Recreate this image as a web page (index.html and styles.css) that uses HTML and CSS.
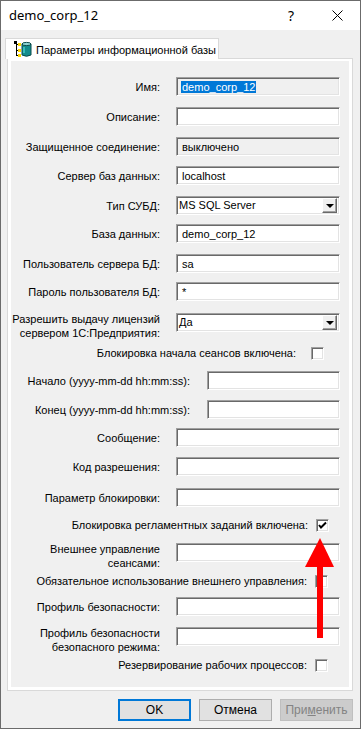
FILE: index.html
```html
<!DOCTYPE html>
<html lang="ru">
<head>
    <meta charset="UTF-8">
    <title>demo_corp_12</title>
    <link rel="stylesheet" href="styles.css">
</head>
<body>
    <div class="window">
        <div class="titlebar">
            <span class="title">demo_corp_12</span>
            <div class="caption-buttons">
                <span class="cap-btn help">?</span>
                <span class="cap-btn">
                    <svg width="11" height="11" viewBox="0 0 11 11"><path d="M0.5 0.5 L10.5 10.5 M10.5 0.5 L0.5 10.5" stroke="#000" stroke-width="1" fill="none"/></svg>
                </span>
            </div>
        </div>

        <div class="dialog">
            <div class="tabs">
                <div class="tab active">
                    <svg class="tab-icon" width="18" height="17" viewBox="0 0 18 17">
                        <path d="M2.5 1 V15 M2.5 3.5 H5 M2.5 9.5 H5 M2.5 14.5 H5" stroke="#000" stroke-width="1" fill="none"/>
                        <rect x="0" y="0" width="3" height="3" fill="#000"/>
                        <rect x="4" y="2" width="3" height="3" fill="#ffd800"/>
                        <rect x="4" y="8" width="3" height="3" fill="#ffd800"/>
                        <rect x="4" y="13" width="3" height="3" fill="#ffd800"/>
                        <path d="M8 3 V14 Q12.5 16.5 17 14 V3 Z" fill="#138c8c" stroke="#0b4a4a" stroke-width="1"/>
                        <ellipse cx="12.5" cy="3" rx="4.5" ry="1.6" fill="#8fd6d6" stroke="#0b4a4a" stroke-width="1"/>
                        <rect x="9" y="6" width="2" height="6" fill="#3bbcbc"/>
                    </svg>
                    <span>Параметры информационной базы</span>
                </div>
            </div>

            <div class="tab-page">
                <div class="form">
                    <div class="row">
                        <span class="label">Имя:</span>
                        <div class="field readonly"><span class="selection">demo_corp_12</span></div>
                    </div>
                    <div class="row">
                        <span class="label">Описание:</span>
                        <div class="field"></div>
                    </div>
                    <div class="row r29">
                        <span class="label">Защищенное соединение:</span>
                        <div class="field readonly">выключено</div>
                    </div>
                    <div class="row">
                        <span class="label">Сервер баз данных:</span>
                        <div class="field">localhost</div>
                    </div>
                    <div class="row r28">
                        <span class="label">Тип СУБД:</span>
                        <div class="field combo">
                            <span class="combo-text">MS SQL Server</span>
                            <span class="combo-btn"><span class="combo-arrow"></span></span>
                        </div>
                    </div>
                    <div class="row">
                        <span class="label">База данных:</span>
                        <div class="field">demo_corp_12</div>
                    </div>
                    <div class="row r28">
                        <span class="label">Пользователь сервера БД:</span>
                        <div class="field">sa</div>
                    </div>
                    <div class="row r31">
                        <span class="label">Пароль пользователя БД:</span>
                        <div class="field">*</div>
                    </div>
                    <div class="row r34">
                        <span class="label two-lines">Разрешить выдачу лицензий<br>сервером 1С:Предприятия:</span>
                        <div class="field combo">
                            <span class="combo-text">Да</span>
                            <span class="combo-btn"><span class="combo-arrow"></span></span>
                        </div>
                    </div>
                    <div class="row check-row r24 pr27 gap15">
                        <span class="check-label">Блокировка начала сеансов включена:</span>
                        <span class="checkbox"></span>
                    </div>
                    <div class="row r29 gap17">
                        <span class="label wide">Начало (yyyy-mm-dd hh:mm:ss):</span>
                        <div class="field short"></div>
                    </div>
                    <div class="row r28 gap17">
                        <span class="label wide">Конец (yyyy-mm-dd hh:mm:ss):</span>
                        <div class="field short"></div>
                    </div>
                    <div class="row r29">
                        <span class="label">Сообщение:</span>
                        <div class="field"></div>
                    </div>
                    <div class="row r31">
                        <span class="label">Код разрешения:</span>
                        <div class="field"></div>
                    </div>
                    <div class="row r31">
                        <span class="label">Параметр блокировки:</span>
                        <div class="field"></div>
                    </div>
                    <div class="row check-row r24 pr22">
                        <span class="check-label">Блокировка регламентных заданий включена:</span>
                        <span class="checkbox checked">
                            <svg width="11" height="11" viewBox="0 0 11 11"><path d="M2 5 L4 7.5 L9 2.5" stroke="#000" stroke-width="2" fill="none"/></svg>
                        </span>
                    </div>
                    <div class="row r32">
                        <span class="label two-lines">Внешнее управление<br>сеансами:</span>
                        <div class="field"></div>
                    </div>
                    <div class="row check-row r22 pr23">
                        <span class="check-label">Обязательное использование внешнего управления:</span>
                        <span class="checkbox"></span>
                    </div>
                    <div class="row">
                        <span class="label">Профиль безопасности:</span>
                        <div class="field"></div>
                    </div>
                    <div class="row r32">
                        <span class="label two-lines">Профиль безопасности<br>безопасного режима:</span>
                        <div class="field"></div>
                    </div>
                    <div class="row check-row r28 pr23">
                        <span class="check-label">Резервирование рабочих процессов:</span>
                        <span class="checkbox"></span>
                    </div>
                </div>
            </div>

            <div class="buttons">
                <button class="btn default">OK</button>
                <button class="btn">Отмена</button>
                <button class="btn" disabled>При<u>м</u>енить</button>
            </div>
        </div>

        <!-- стрелка-указатель поверх формы -->
        <svg class="pointer" width="40" height="110" viewBox="0 0 40 110">
            <polygon points="15,0 0,29 29,29" fill="#f00"/>
            <rect x="12" y="28" width="6" height="72" fill="#f00"/>
        </svg>
    </div>
</body>
</html>
```

FILE: styles.css
```css
* {
    margin: 0;
    padding: 0;
    box-sizing: border-box;
}

body {
    background: #ffffff;
    font-family: 'Liberation Sans', Arial, sans-serif;
    font-size: 11px;
    color: #000;
}

.window {
    position: relative;
    width: 361px;
    height: 729px;
    border: 1px solid #6b6b6b;
    background: #f0f0f0;
}

.titlebar {
    height: 29px;
    background: #ffffff;
    display: flex;
    align-items: center;
    justify-content: space-between;
}

.title {
    font-family: 'Noto Sans', sans-serif;
    font-size: 13px;
    padding-left: 8px;
    padding-bottom: 1px;
}

.caption-buttons {
    display: flex;
    height: 100%;
}

.cap-btn {
    width: 46px;
    display: flex;
    align-items: center;
    justify-content: center;
}

.cap-btn.help {
    font-family: 'Noto Sans', sans-serif;
    font-size: 14px;
    padding-bottom: 1px;
}

.dialog {
    padding: 8px 7px 0 6px;
}

.tabs {
    display: flex;
    height: 20px;
    position: relative;
    z-index: 1;
}

.tab {
    margin-left: -2px;
    height: 21px;
    width: 214px;
    background: #ffffff;
    border: 1px solid #d9d9d9;
    border-bottom: none;
    display: flex;
    align-items: center;
    gap: 4px;
    padding: 1px 0 0 8px;
    font-size: 11px;
    white-space: nowrap;
}

.tab-icon {
    flex-shrink: 0;
}

.tab-page {
    border: 1px solid #d9d9d9;
    background: #ffffff;
    padding: 2px 3px 3px 3px;
}

.form {
    background: #f0f0f0;
    padding: 16px 0 0 0;
    display: flex;
    flex-direction: column;
}

.row {
    display: flex;
    align-items: flex-start;
    height: 30px;
    gap: 16px;
}

.r22 { height: 22px; }
.r24 { height: 24px; }
.r28 { height: 28px; }
.r29 { height: 29px; }
.r31 { height: 31px; }
.r32 { height: 32px; }
.r34 { height: 34px; }

.label {
    width: 149px;
    flex-shrink: 0;
    text-align: right;
    line-height: 14px;
    padding-top: 3px;
    white-space: nowrap;
}

.label.wide {
    width: 179px;
}

.gap17 { gap: 17px; }

.label.two-lines {
    padding-top: 0;
    margin-top: -1px;
}

.field {
    width: 164px;
    height: 19px;
    background: #ffffff;
    border: 1px solid;
    border-color: #a0a0a0 #ffffff #ffffff #a0a0a0;
    box-shadow: inset 1px 1px 0 #696969, inset -1px -1px 0 #e3e3e3;
    padding: 2px 0 0 5px;
    line-height: 14px;
    white-space: nowrap;
    overflow: hidden;
}

.field.short {
    width: 133px;
}

.field.readonly {
    background: #f0f0f0;
}

.selection {
    background: #0078d7;
    color: #ffffff;
    padding: 0 1px;
    margin-left: -1px;
}

.field.combo {
    display: flex;
    align-items: center;
    justify-content: space-between;
    padding: 0 2px 0 2px;
}

.combo-text {
    line-height: 15px;
}

.combo-btn {
    width: 15px;
    height: 15px;
    background: #f0f0f0;
    border: 1px solid;
    border-color: #ffffff #696969 #696969 #ffffff;
    box-shadow: inset -1px -1px 0 #a0a0a0;
    display: flex;
    align-items: center;
    justify-content: center;
}

.combo-arrow {
    width: 0;
    height: 0;
    border-left: 4px solid transparent;
    border-right: 4px solid transparent;
    border-top: 4px solid #000;
    margin-top: 1px;
}

.check-row {
    justify-content: flex-end;
    gap: 8px;
    align-items: flex-start;
}

.gap15 { gap: 15px; }
.pr22 { padding-right: 20px; }
.pr23 { padding-right: 21px; }
.pr27 { padding-right: 25px; }

.check-label {
    line-height: 14px;
    margin-top: -1px;
    white-space: nowrap;
}

.checkbox {
    width: 13px;
    height: 13px;
    flex-shrink: 0;
    background: #ffffff;
    border: 1px solid;
    border-color: #a0a0a0 #ffffff #ffffff #a0a0a0;
    box-shadow: inset 1px 1px 0 #696969, inset -1px -1px 0 #e3e3e3;
    display: flex;
    align-items: center;
    justify-content: center;
}

.buttons {
    display: flex;
    justify-content: flex-end;
    gap: 8px;
    margin-top: 8px;
}

.btn {
    width: 73px;
    height: 22px;
    background: #e1e1e1;
    border: 1px solid #adadad;
    font-family: 'Liberation Sans', sans-serif;
    font-size: 12px;
    color: #000;
}

.btn.default {
    border: 2px solid #0078d7;
}

.btn:disabled {
    background: #cccccc;
    border-color: #bfbfbf;
    color: #838383;
}

.pointer {
    position: absolute;
    left: 304px;
    top: 537px;
}
```
